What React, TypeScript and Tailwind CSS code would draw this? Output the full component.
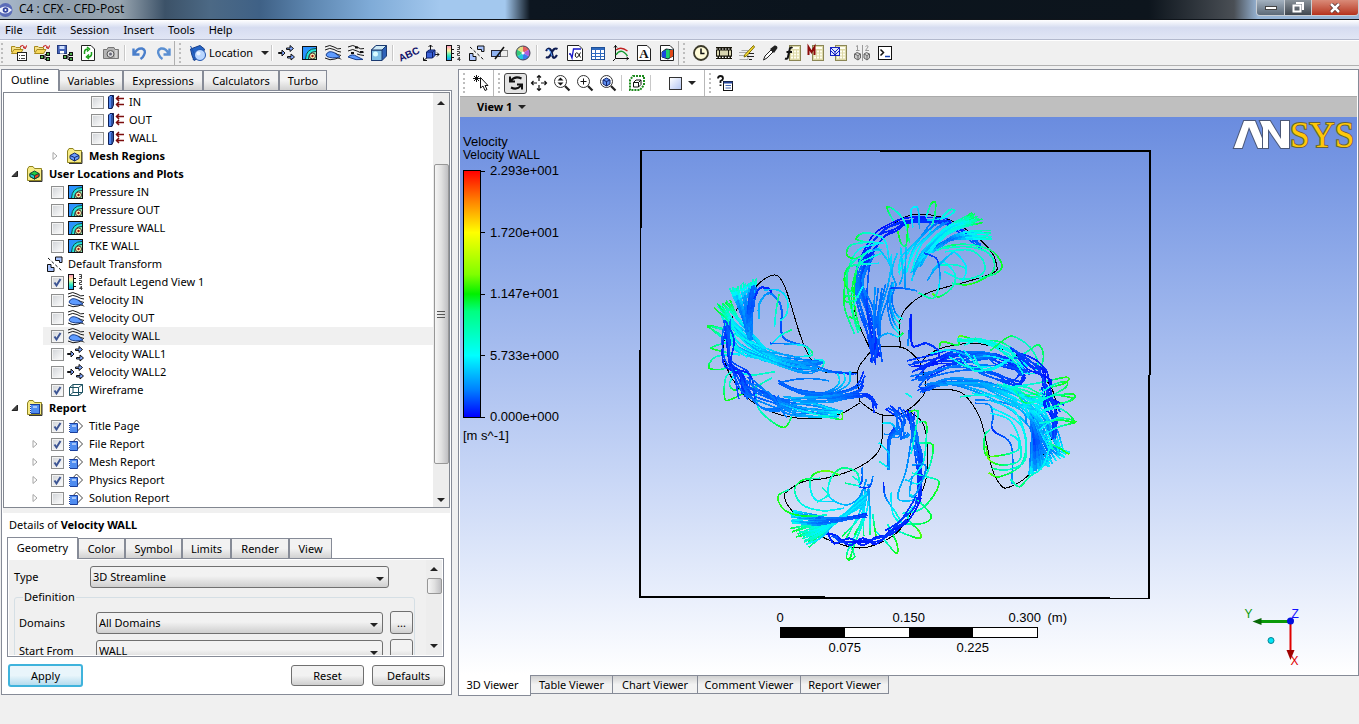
import type { ReactNode } from 'react';

type Pt = [number, number];

/* ---------- small drawing helpers ---------- */

const I = ({ children, size = 16 }: { children: ReactNode; size?: number }) => (
  <svg viewBox="0 0 16 16" width={size} height={size} className="shrink-0 overflow-visible" fill="none" aria-hidden="true">
    {children}
  </svg>
);

const OpenFolder = () => (
  <>
    <path d="M0.5 7V1.500H4L5 2.500H9.500V4" fill="#f5e08a" stroke="#a88a1c" />
    <path d="M0.500 8.500L3 4.500H12L9.500 8.500Z" fill="#f7d85c" stroke="#a88a1c" />
    <path d="M9 1.500Q12 -1 14 2.500M15.500 0.500L14.500 3.500L12 2.500" stroke="#c00000" />
  </>
);

const Nodes = () => (
  <g stroke="#111" fill="#4fae4f">
    <path d="M8 12H11M11 9.500V14.500M11 9.500H13M11 14.500H13" />
    <rect x="6.500" y="10.500" width="3" height="3" />
    <rect x="12.500" y="7.500" width="3" height="3" />
    <rect x="12.500" y="12.500" width="3" height="3" />
  </g>
);

const Page = () => <path d="M1.500 0.500H11L14.500 4V15.500H1.500Z" fill="#fff" stroke="#222" />;

const Calc = () => (
  <g>
    <rect x="4.500" y="0.500" width="11" height="15" fill="#ddd9a8" stroke="#8b8655" />
    <path d="M6 3H14" stroke="#fffef0" strokeWidth="2" />
    <path d="M6 6.500H14M6 9.500H14M6 12.500H14" stroke="#fffef0" strokeWidth="2" strokeDasharray="2 1" />
  </g>
);

const icons: Record<string, ReactNode> = {
  load: (
    <>
      <OpenFolder />
      <rect x="6.500" y="7.500" width="9" height="8" fill="#fff" stroke="#222" />
      <path d="M8 10.500H9M10 10.500H14M8 13.500H9M10 13.500H14" stroke="#444" />
    </>
  ),
  loadState: (
    <>
      <OpenFolder />
      <Nodes />
    </>
  ),
  saveState: (
    <>
      <rect x="0.500" y="0.500" width="9" height="8" fill="#4664b8" stroke="#243b7d" />
      <path d="M2.500 1H7.500V4H2.500Z" fill="#cfe0ff" />
      <path d="M3 6H7V8.500H3Z" fill="#fff" />
      <Nodes />
    </>
  ),
  refresh: (
    <>
      <Page />
      <path d="M4.500 9V6.500Q5 4 8 4M7 2L9.500 4L7 6.500M11.500 7V9.500Q11 12 8 12M9 9.500L6.500 12L9 14" stroke="#19a019" strokeWidth="1.500" />
    </>
  ),
  camera: (
    <>
      <path d="M0.500 4.500H4L5 2.500H11L12 4.500H15.500V13.500H0.500Z" fill="#b4b4b4" stroke="#777" />
      <circle cx="7.500" cy="9" r="3.500" fill="#ddd" stroke="#555" />
      <circle cx="7.500" cy="9" r="1.500" fill="#667" />
      <path d="M13 5V13" stroke="#eee" />
    </>
  ),
  undo: <path d="M1.500 3.500V9.500H7.500M2.500 8.500Q5 3 10 3.500Q14.500 5 12 10Q11 12.500 8.500 14" stroke="#4a7fcb" strokeWidth="2.400" />,
  redo: <path d="M14.500 3.500V9.500H8.500M13.500 8.500Q11 3 6 3.500Q1.500 5 4 10Q5 12.500 7.500 14" stroke="#5a8fd2" strokeWidth="2.400" />,
  location: (
    <>
      <path d="M0.500 4L10 0.500L14.500 4L12.500 11L4 15.500L2 10.500Z" fill="#2465c8" stroke="#183e88" />
      <path d="M0.500 1L5 10M3 15L6 9" stroke="#1d4fa8" />
      <circle cx="10" cy="10" r="5.500" fill="#b9d6ff" stroke="#2256b0" />
      <circle cx="8.500" cy="8.500" r="2" fill="#eaf3ff" />
    </>
  ),
  vector: (
    <g fill="#7fa6ff" stroke="#111">
      <path d="M-0.500 7.500H3V5L6 8L3 11V8.500H-0.500Z" />
      <path d="M7.500 3H11V0.500L14.500 3.500L11 6.500V4.500H7.500Z" />
      <path d="M8.500 11.500H12V9L15.500 12L12 15V13H8.500Z" />
    </g>
  ),
  contour: (
    <>
      <rect x="0" y="1" width="15" height="14" fill="#2a92ff" />
      <path d="M14 3Q4 2 3 14H14Z" fill="#20e8d8" />
      <path d="M14 6Q6.500 6 6 14H14Z" fill="#8ff0b0" />
      <path d="M3.500 14Q4 3.500 14 3.500M6.500 14Q6.500 6.500 14 6.500" stroke="#0f3a50" />
      <circle cx="10.500" cy="11" r="3" fill="#fff8b0" stroke="#433" />
      <circle cx="10.500" cy="11" r="1.200" fill="#a01010" />
      <rect x="0.500" y="1.500" width="14" height="13" stroke="#111" />
    </>
  ),
  stream: (
    <>
      <g stroke="#1a1a1a">
        <path d="M0 2Q5 -1 9 2T16 3.500M0 5Q5 2 9 4.500T16 7M10 8Q13 10 16 10.500M0 13Q5 16 10 14T16 14.500" />
      </g>
      <path d="M1 10Q3 5 9 7.500Q12 9.500 15 12Q7 14 2 11.500Z" fill="#5f9cff" stroke="#173d8c" />
    </>
  ),
  particle: (
    <>
      <path d="M0 2Q5 -1 9 2T16 3.500M0 6Q5 3 9 6T16 7M9 9Q12 10 16 10.500" stroke="#1a1a1a" />
      <path d="M7 2.500H10M3 8H6M12 7H15" stroke="#111" strokeWidth="2" />
      <path d="M0 12Q4 8 9 11.500Q12 13 15 14.500Q7 15.500 3 13Z" fill="#5f9cff" stroke="#173d8c" />
    </>
  ),
  volume: (
    <>
      <path d="M0.500 5L5 0.500H15.500V11L11 15.500H0.500Z" fill="#2e62b8" stroke="#1b3a70" />
      <path d="M0.500 5H11V15.500H0.500Z" fill="#7fbfe6" stroke="#1b3a70" />
      <path d="M0.500 5L5 0.500H15.500L11 5Z" fill="#cfeaf6" stroke="#1b3a70" />
      <circle cx="4.500" cy="9" r="2.500" fill="#d8fbff" />
    </>
  ),
  text: (
    <text x="-2" y="13" transform="rotate(-24 8 9)" fontSize="10" fontWeight="bold" fontFamily="Liberation Sans" fill="#10106a">
      ABC
    </text>
  ),
  coord: (
    <>
      <path d="M7.500 6V0M5.500 2L7.500 0L9.500 2M10 9.500H16M14 7.500L16 9.500L14 11.500M5 12L0.500 15.500M0.500 12.500V15.500H4" stroke="#111" />
      <path d="M3.500 7L6 5H12V10.500L9.500 13H3.500Z" fill="#3b62d8" stroke="#0c1f66" />
      <path d="M3.500 7H9.500V13M9.500 7L12 5" stroke="#0c1f66" />
    </>
  ),
  legend: (
    <>
      <rect x="0.500" y="0.500" width="5" height="15" fill="url(#legendIcon)" stroke="#111" />
      <path d="M6 4.500H8M6 8.500H8M6 12.500H8" stroke="#111" />
      <path d="M11 0.500H13.500V4.500H11M11.500 2.500H13M11 6.500H13.500V8.500H11.500V10.500H14M13.500 12L11.500 14.500H14.500M13.500 12V16" stroke="#444" />
    </>
  ),
  transform: (
    <>
      <path d="M8.500 1H15V6.500H12.500V4.500H8.500Z" fill="#a9c4ff" stroke="#111" />
      <path d="M0.500 8.500H4V11.500H7V15.500H0.500Z" fill="#a9c4ff" stroke="#111" />
      <path d="M1 2L15 15" stroke="#111" strokeDasharray="3 2" />
    </>
  ),
  clip: (
    <>
      <rect x="-0.500" y="5.500" width="9" height="6" fill="#8fb2f2" stroke="#223" />
      <rect x="8.500" y="5.500" width="7" height="6" fill="#eee" stroke="#222" strokeDasharray="1 1" />
      <path d="M3 14L12 2" stroke="#111" strokeWidth="1.500" />
    </>
  ),
  wheel: (
    <>
      <circle cx="8" cy="8" r="7" fill="#eee" />
      <path d="M8 8L8 1A7 7 0 0 1 14 4.500Z" fill="#e46060" />
      <path d="M8 8L14 4.500A7 7 0 0 1 14 11.500Z" fill="#b05cd8" />
      <path d="M8 8L14 11.500A7 7 0 0 1 8 15Z" fill="#3d7af0" />
      <path d="M8 8L8 15A7 7 0 0 1 2 11.500Z" fill="#22c8d8" />
      <path d="M8 8L2 11.500A7 7 0 0 1 2 4.500Z" fill="#34c878" />
      <path d="M8 8L2 4.500A7 7 0 0 1 8 1Z" fill="#e2dc80" />
      <circle cx="8" cy="8" r="7" stroke="#445" />
      <circle cx="8" cy="8" r="1.500" fill="#fff" />
    </>
  ),
  variable: (
    <>
      <path d="M2 6Q5 1 7.500 6L8.500 11Q10 15 13 10M13.500 4Q10 2 7.500 8Q5 14 2 12" stroke="#0d1b50" strokeWidth="2.200" />
      <path d="M3 5Q5 3 6.500 7L8 11" stroke="#5aa0ff" />
    </>
  ),
  expression: (
    <>
      <path d="M0.500 0.500H12L15.500 4V15.500H0.500Z" fill="#fff" stroke="#222" />
      <path d="M2 9H3.500L5 13L6.500 4H14" stroke="#1515c8" strokeWidth="1.300" />
      <path d="M13.500 7.500Q11 13 9.500 12.500Q7.500 11.500 8.500 8.500Q10.500 6 13.500 12.500" stroke="#111" />
    </>
  ),
  table: (
    <>
      <rect x="1.500" y="2.500" width="13" height="12" fill="#fff" stroke="#1f5096" />
      <path d="M2 4H14" stroke="#2e6ac0" strokeWidth="2" />
      <path d="M1 8.500H14M1 11.500H14M5.500 3V14.500M10.500 3V14.500" stroke="#2e6ac0" />
    </>
  ),
  chart: (
    <>
      <path d="M2.500 0V13.500H16M1 2.500L2.500 0.500L4 2.500M13.500 12L15.500 13.500L13.500 15M2.500 13.500L0 16" stroke="#111" />
      <path d="M3 5Q8 1 14.500 6" stroke="#c02020" strokeWidth="1.300" />
      <path d="M3 10Q8 2 14.500 11" stroke="#139a30" strokeWidth="1.300" />
    </>
  ),
  comment: (
    <>
      <Page />
      <text x="8" y="13" textAnchor="middle" fontSize="13" fontWeight="bold" fontFamily="Liberation Serif" fill="#111">
        A
      </text>
    </>
  ),
  figure: (
    <>
      <Page />
      <path d="M3 7L7 4L14 5V11L9 14L3 12Z" fill="#20a860" stroke="#123" />
      <path d="M3 7L7 5V13L3 12Z" fill="#1a48e0" />
      <path d="M7 5L10 4.500V13L7 13Z" fill="#1fd070" />
      <path d="M11 5L14 5V11L11 13Z" fill="#e04818" />
    </>
  ),
  clock: (
    <>
      <circle cx="8" cy="8" r="7" fill="#fffbd8" stroke="#3c3a2a" strokeWidth="1.800" />
      <path d="M8 3.500V8.500H11.500" stroke="#111" strokeWidth="1.500" />
    </>
  ),
  film: (
    <>
      <rect x="0" y="2" width="16" height="12" fill="#17150a" />
      <path d="M0 4H16M0 12.300H16" stroke="#fff" strokeWidth="1.200" strokeDasharray="1.500 1.500" />
      <path d="M1 5.500H3V10.500H1ZM4 5.500H12V10.500H4ZM13 5.500H15V10.500H13Z" fill="#d9d6b0" />
    </>
  ),
  quickEdit: (
    <>
      <path d="M2.500 5.500H9V14.500H0.500M0 7.500H8M0 10.500H8" stroke="#aaa" />
      <path d="M14.500 0.500L6 9.500L5 12L7.500 11L15.500 2Z" fill="#ffe030" stroke="#7a6a00" />
      <path d="M10 8.500H15M8 11.500H15M10 14.500H13" stroke="#222" />
    </>
  ),
  probe: (
    <>
      <path d="M1.500 15L3 11L9 5L11 7L5 13Z" fill="#fff" stroke="#222" />
      <path d="M8 4L12 8L15.500 3Q15.500 0 12.500 0.500Z" fill="#222" />
    </>
  ),
  functionCalc: (
    <>
      <Calc />
      <path d="M7.500 3Q5 1.500 4.500 5L3 12Q2.500 14.500 0 13.500M1.500 7H7" stroke="#111" strokeWidth="2" />
    </>
  ),
  macroCalc: (
    <>
      <Calc />
      <path d="M0.500 10V2L3.500 7L6.500 2V10" stroke="#8b0a0a" strokeWidth="2" />
    </>
  ),
  meshCalc: (
    <>
      <Calc />
      <rect x="-0.500" y="2.500" width="9" height="8" fill="#dfe6ff" stroke="#1420c0" />
      <path d="M0 3L4 7L8 3M4 7V10M0 6L4 10L8 6" stroke="#1420c0" />
    </>
  ),
  compare: (
    <g stroke="#9a9a9a">
      <path d="M8.500 0V16M2 1.500L3.500 0.500V5M2 5.500H5.500M11.500 1.500Q14 -0.500 14 2L11.500 5.500H15" />
      <path d="M0.500 9L3 7.500L6.500 9V13L4 15L0.500 13ZM0.500 9L4 10.500L6.500 9M4 10.500V15M10 9L12.500 7.500L15.500 9V13L13 15L10 13ZM10 9L13 10.500L15.500 9M13 10.500V15" fill="#ccc" stroke="#666" />
    </g>
  ),
  command: (
    <>
      <rect x="1.500" y="1.500" width="13" height="13" fill="#fff" stroke="#111" />
      <path d="M3.500 4.500L6.500 7.500L3.500 10.500" stroke="#111" strokeWidth="1.500" />
      <path d="M8 11.500H13" stroke="#1540b0" strokeWidth="1.500" />
    </>
  ),
  select: (
    <>
      <path d="M3.500 0V7M0 3.500H7M1 1L6 6M6 1L1 6" stroke="#111" />
      <path d="M7.500 2.500V13L10 11L12 15.500L14 14.500L12 10.500H15Z" fill="#fff" stroke="#111" />
    </>
  ),
  rotate: (
    <path d="M3 5.500Q7 0.500 13.500 3.500M2 1.500V6.500H7M13 10.500Q9 15.500 3 12.500M14 14.500V9.500H9" stroke="#111" strokeWidth="2" />
  ),
  pan: (
    <path
      d="M8 0.500V6M8 10V15.500M0.500 8H6M10 8H15.500M6 2.500L8 0.500L10 2.500M6 13.500L8 15.500L10 13.500M2.500 6L0.500 8L2.500 10M13.500 6L15.500 8L13.500 10"
      stroke="#111"
      strokeWidth="1.200"
    />
  ),
  zoomDrag: (
    <>
      <circle cx="6.500" cy="6.500" r="6" stroke="#333" />
      <path d="M11 11L15.500 15.500" stroke="#222" strokeWidth="2.200" />
      <path d="M3.500 5.500H9.500L6.500 2.500ZM3.500 7.500H9.500L6.500 10.500Z" fill="#111" />
    </>
  ),
  zoomBox: (
    <>
      <circle cx="6.500" cy="6.500" r="6" stroke="#333" />
      <path d="M11 11L15.500 15.500" stroke="#222" strokeWidth="2.200" />
      <path d="M6.500 3.500V9.500M3.500 6.500H9.500" stroke="#111" />
    </>
  ),
  fit: (
    <>
      <circle cx="6.500" cy="6.500" r="6" stroke="#333" />
      <path d="M11 11L15.500 15.500" stroke="#222" strokeWidth="2.200" />
      <path d="M3 5L6.500 3L10 5V9L6.500 11L3 9Z" fill="#5e8df0" stroke="#12266c" />
      <path d="M3 5L6.500 6.500L10 5M6.500 6.500V11" stroke="#12266c" />
    </>
  ),
  highlight: (
    <>
      <path d="M4 1H15V10L11 15H1V5Z" stroke="#1d8a1d" strokeWidth="2" strokeDasharray="2 1" />
      <path d="M4.500 7.500H9.500V12H4.500ZM4.500 7.500L7 5H12V9.500L9.500 12M9.500 7.500L12 5" stroke="#111" />
    </>
  ),
  help: (
    <>
      <path d="M1 3.500Q1 1 3.500 1T6 3.500Q6 5 3.500 6V8M3.500 9.500V11" stroke="#111" strokeWidth="1.800" />
      <rect x="6.500" y="6.500" width="9" height="9" fill="#fff" stroke="#111" />
      <path d="M6.500 7.500H15.500" stroke="#24459a" strokeWidth="2" />
      <path d="M8.500 10.500H14M8.500 13H14" stroke="#4468b8" />
    </>
  ),
  boundary: (
    <>
      <path d="M0.500 3L2 1.500H5.500V11L4 14.500H0.500Z" fill="#4f86f0" stroke="#0f1f55" />
      <path d="M4 3V14M4 3L5.500 1.500" stroke="#0f1f55" />
      <path d="M8 4.500H16M11 2L8.500 4.500L11 7M8 10.500H16M11 8L8.500 10.500L11 13" stroke="#7c0d0d" strokeWidth="1.500" />
    </>
  ),
  folderMesh: (
    <>
      <path d="M0.500 3L2 0.500H6L7.500 2.500H14.500V14.500H0.500Z" fill="#f7eb86" stroke="#8f8420" />
      <path d="M15 4V15.500H2" stroke="#333" />
      <path d="M3 7.500L7.500 5L12 7.500V10.500L7.500 13L3 10.500Z" fill="#6b9cff" stroke="#122968" />
      <path d="M3 7.500L7.500 9.500L12 7.500M7.500 9.500V13" stroke="#122968" />
    </>
  ),
  folderUser: (
    <>
      <path d="M0.500 3L2 0.500H6L7.500 2.500H14.500V14.500H0.500Z" fill="#f7eb86" stroke="#8f8420" />
      <path d="M15 4V15.500H2" stroke="#333" />
      <path d="M3 7.500L7.500 5L12 7.500V10.500L7.500 13L3 10.500Z" fill="#21cc42" stroke="#143" />
      <path d="M7.500 9.500L12 7.500V10.500L7.500 13Z" fill="#f04020" stroke="#143" />
      <path d="M3 7.500L7.500 9.500V13L3 10.500Z" fill="#28c9d8" stroke="#143" />
    </>
  ),
  folderReport: (
    <>
      <path d="M0.500 3L2 0.500H6L7.500 2.500H14.500V14.500H0.500Z" fill="#f7eb86" stroke="#8f8420" />
      <path d="M15 4V15.500H2" stroke="#333" />
      <rect x="3.500" y="4.500" width="9" height="9" fill="#4f8cf0" stroke="#1b3f9c" />
      <path d="M3.500 5V14" stroke="#eef" strokeDasharray="1 1" />
      <path d="M6 7H10" stroke="#fff" />
    </>
  ),
  report: (
    <>
      <path d="M8.500 2L14.500 8L8.500 14L3 8Z" fill="#fff" stroke="#444" />
      <path d="M1.500 5.500H9.500V14.500H1.500Z" fill="#4f8cf0" stroke="#1b3f9c" />
      <path d="M1.500 6V15" stroke="#fff" strokeDasharray="1 1" />
      <path d="M4 8H8" stroke="#fff" />
    </>
  ),
  wireframe: (
    <path d="M1.500 5.500H10.500V13.500H1.500ZM1.500 5.500L5 2.500H14.500V10.500L10.500 13.500M10.500 5.500L14.500 2.500M5 2.500V10.500H14.500M5 10.500L1.500 13.500" stroke="#1a5060" />
  ),
};

const Icon = ({ name }: { name: string }) => <I>{icons[name]}</I>;

const Caret = ({ up = false }: { up?: boolean }) => (
  <svg width="8" height="4" viewBox="0 0 8 4" aria-hidden="true" className="shrink-0">
    <path d={up ? 'M0 4L4 0L8 4Z' : 'M0 0H8L4 4Z'} fill="#222" />
  </svg>
);

/* ---------- toolbars ---------- */

function Tool({ name, label, active = false }: { name: string; label: string; active?: boolean }) {
  return (
    <button
      aria-label={label}
      className={
        active
          ? 'flex h-[21px] w-[23px] items-center justify-center rounded-[3px] border border-[#444] bg-[#e4e4e4]'
          : 'flex h-[21px] w-[23px] items-center justify-center'
      }
    >
      <Icon name={name} />
    </button>
  );
}

const Tools = ({ names }: { names: string[] }) => (
  <>
    {names.map((n) => (
      <Tool key={n} name={n} label={n} />
    ))}
  </>
);

const Separator = () => <div className="mx-[2px] h-4 w-0.5 border-l border-[#c8c8c8] bg-white" />;

const Grip = () => (
  <div className="flex h-5 w-[2px] flex-col justify-between">
    {[0, 1, 2, 3, 4].map((i) => (
      <span key={i} className="h-[2px] w-[2px] bg-[#bdbdbd]" />
    ))}
  </div>
);

function TitleBar() {
  return (
    <header className="flex h-5 items-start justify-between border-b border-[#10151b] bg-[linear-gradient(90deg,#a9b9cb_0px,#8d9cab_60px,#98a5b0_120px,#3c5268_165px,#4c6985_210px,#3f6186_260px,#5d86b0_310px,#7fabd7_370px,#a3c8ee_440px,#a3c8ee_505px,#0d1620_530px,#0b141d_60%,#0d151d_calc(100%-210px),#4a4f55_calc(100%-125px),#98b5d6_calc(100%-101px))]">
      <div className="flex h-[18px] items-center gap-1.5">
        <svg width="13" height="15" viewBox="0 0 13 15" aria-hidden="true">
          <circle cx="5.500" cy="8" r="7" fill="#5a6cb8" />
          <path d="M-2 8Q5.500 1 12 8Q5.500 15 -2 8Z" fill="#eef2ff" />
          <circle cx="5.500" cy="8" r="2.800" fill="#3548a0" />
          <circle cx="5.500" cy="8" r="1" fill="#fff" />
        </svg>
        <h1 className="font-['Open_Sans',sans-serif] text-xs leading-4 text-black">C4 : CFX - CFD-Post</h1>
      </div>
      <div className="flex h-4 overflow-hidden rounded-b-[4px] border border-t-0 border-[#c9ced4]">
        <button aria-label="Minimize" className="flex w-7 items-center justify-center border-r border-[#c9ced4] bg-linear-to-b from-[#a4b2c0] to-[#5d6a78]">
          <span className="h-1 w-3 border border-[#444] bg-white" />
        </button>
        <button aria-label="Restore" className="flex w-[27px] items-center justify-center border-r border-[#c9ced4] bg-linear-to-b from-[#8b949c] to-[#40474f]">
          <svg width="12" height="11" viewBox="0 0 12 11" aria-hidden="true">
            <path d="M4 1H11V8M1.500 3.500H8.500V9.500H1.500Z" fill="none" stroke="#fff" strokeWidth="2" />
          </svg>
        </button>
        <button aria-label="Close" className="flex w-[46px] items-center justify-center bg-linear-to-b from-[#d98a78] to-[#b5301a]">
          <svg width="12" height="10" viewBox="0 0 12 10" aria-hidden="true">
            <path d="M2 1L10 9M10 1L2 9" stroke="#4d2a2a" strokeWidth="4" />
            <path d="M2 1L10 9M10 1L2 9" stroke="#fff" strokeWidth="2.500" />
          </svg>
        </button>
      </div>
    </header>
  );
}

function MenuBar() {
  return (
    <nav className="flex h-5 items-center gap-[14px] border-b border-[#b3b9cd] bg-linear-to-b from-white via-[#d6dcf0] via-40% to-[#e1e6f5] px-[5px]">
      {['File', 'Edit', 'Session', 'Insert', 'Tools', 'Help'].map((m) => (
        <button key={m}>{m}</button>
      ))}
    </nav>
  );
}

function MainToolbar() {
  return (
    <div className="flex h-[26px] items-center border-t border-b border-t-white border-b-[#b0b0b0]">
      <div className="flex h-full items-center border-r border-[#b0b0b0] pl-px">
        <Grip />
        <div className="w-1" />
        <Tools names={['load', 'loadState', 'saveState', 'refresh', 'camera']} />
        <Separator />
        <Tools names={['undo', 'redo']} />
      </div>
      <div className="flex h-full items-center border-r border-[#b0b0b0] pl-1">
        <Grip />
        <button className="flex h-5 w-[88px] items-center pl-[9px]">
          <Icon name="location" />
          <span className="ml-[3px] flex-1 text-left">Location</span>
          <Caret />
        </button>
        <Separator />
        <Tools names={['vector', 'contour', 'stream', 'particle', 'volume']} />
        <Separator />
        <Tools names={['text', 'coord', 'legend', 'transform', 'clip', 'wheel']} />
        <Separator />
        <Tools names={['variable', 'expression', 'table', 'chart', 'comment', 'figure']} />
      </div>
      <div className="flex items-center pl-1">
        <Grip />
        <div className="w-1" />
        <Tools names={['clock', 'film', 'quickEdit', 'probe', 'functionCalc', 'macroCalc', 'meshCalc', 'compare', 'command']} />
      </div>
    </div>
  );
}

/* ---------- outline tree ---------- */

interface TreeItem {
  label: string;
  icon: string;
  depth: 0 | 1 | 2 | 3;
  checked?: boolean;
  open?: boolean;
  bold?: boolean;
  selected?: boolean;
}

const tree: TreeItem[] = [
  { label: 'IN', icon: 'boundary', depth: 3, checked: false },
  { label: 'OUT', icon: 'boundary', depth: 3, checked: false },
  { label: 'WALL', icon: 'boundary', depth: 3, checked: false },
  { label: 'Mesh Regions', icon: 'folderMesh', depth: 2, open: false, bold: true },
  { label: 'User Locations and Plots', icon: 'folderUser', depth: 0, open: true, bold: true },
  { label: 'Pressure IN', icon: 'contour', depth: 1, checked: false },
  { label: 'Pressure OUT', icon: 'contour', depth: 1, checked: false },
  { label: 'Pressure WALL', icon: 'contour', depth: 1, checked: false },
  { label: 'TKE WALL', icon: 'contour', depth: 1, checked: false },
  { label: 'Default Transform', icon: 'transform', depth: 1 },
  { label: 'Default Legend View 1', icon: 'legend', depth: 1, checked: true },
  { label: 'Velocity IN', icon: 'stream', depth: 1, checked: false },
  { label: 'Velocity OUT', icon: 'stream', depth: 1, checked: false },
  { label: 'Velocity WALL', icon: 'stream', depth: 1, checked: true, selected: true },
  { label: 'Velocity WALL1', icon: 'vector', depth: 1, checked: false },
  { label: 'Velocity WALL2', icon: 'vector', depth: 1, checked: false },
  { label: 'Wireframe', icon: 'wireframe', depth: 1, checked: true },
  { label: 'Report', icon: 'folderReport', depth: 0, open: true, bold: true },
  { label: 'Title Page', icon: 'report', depth: 1, checked: true },
  { label: 'File Report', icon: 'report', depth: 1, checked: true, open: false },
  { label: 'Mesh Report', icon: 'report', depth: 1, checked: true, open: false },
  { label: 'Physics Report', icon: 'report', depth: 1, checked: true, open: false },
  { label: 'Solution Report', icon: 'report', depth: 1, checked: false, open: false },
];

const indents = ['pl-[3px]', 'pl-[23px]', 'pl-[43px]', 'pl-[63px]'];

function TreeRow({ item }: { item: TreeItem }) {
  const hasCheck = item.checked !== undefined;
  return (
    <li className={`flex h-[18px] items-center ${indents[item.depth]}`}>
      <span className="flex w-4 shrink-0 justify-center">
        {item.open !== undefined && (
          <svg width="8" height="8" viewBox="0 0 8 8" aria-hidden="true">
            {item.open ? <path d="M1 6.500L6.500 1V6.500Z" fill="#444" stroke="#222" /> : <path d="M2 0.500L6 4L2 7.500Z" fill="#fff" stroke="#a5a5a5" />}
          </svg>
        )}
      </span>
      <label className={`flex h-full flex-1 items-center ${item.selected ? 'bg-[#f0f0f0]' : ''} ${hasCheck ? 'pl-2' : 'pl-1'}`}>
        {hasCheck && (
          <span className="relative mr-1 h-[13px] w-[13px]">
            <input
              type="checkbox"
              defaultChecked={item.checked}
              className="peer block h-[13px] w-[13px] appearance-none border border-[#8e8f8f] bg-linear-to-br from-[#cfd2d6] to-white outline outline-1 -outline-offset-2 outline-[#f4f4f4]"
            />
            <svg viewBox="0 0 13 13" className="pointer-events-none absolute inset-0 hidden peer-checked:block" aria-hidden="true">
              <path d="M3.500 6.500L5.500 9.500L9.500 3" fill="none" stroke="#3d5594" strokeWidth="2" />
            </svg>
          </span>
        )}
        <Icon name={item.icon} />
        <span className={item.bold ? 'ml-[6px] font-bold' : 'ml-[5px]'}>{item.label}</span>
      </label>
    </li>
  );
}

/* ---------- left column ---------- */

function Tabs({ items, className = '' }: { items: [string, string][]; className?: string }) {
  return (
    <div role="tablist" className={`relative z-10 flex items-end ${className}`}>
      {items.map(([label, width], i) => (
        <button
          key={label}
          role="tab"
          aria-selected={i === 0}
          className={
            i === 0
              ? `-mb-px h-[22px] border border-b-0 border-[#868b97] bg-white pb-0.5 ${width}`
              : `h-5 border border-b-0 border-[#868b97] bg-linear-to-b from-[#f2f2f2] from-50% to-[#d2d2d2] ${width}`
          }
        >
          {label}
        </button>
      ))}
    </div>
  );
}

const thumbClass = 'rounded-[2px] border border-[#979797] bg-linear-to-r from-[#f5f5f5] via-[#e0e0e0] to-[#bfbfc2]';

function SelectBox({ id, value, className }: { id: string; value: string; className: string }) {
  return (
    <div className={`relative shrink-0 ${className}`}>
      <select
        id={id}
        defaultValue={value}
        className="block h-[22px] w-full appearance-none rounded-[3px] border border-[#707070] bg-linear-to-b from-[#f2f2f2] from-45% to-[#cfcfcf] pl-[2px] text-black"
      >
        <option>{value}</option>
      </select>
      <span className="pointer-events-none absolute top-[11px] right-[5px] flex">
        <Caret />
      </span>
    </div>
  );
}

const buttonClass = 'rounded-[3px] border border-[#707070] bg-linear-to-b from-[#f2f2f2] from-50% to-[#cfcfcf]';

function Details() {
  return (
    <section className="bg-white pb-[6px] pl-1">
      <h2 className="flex h-6 items-center gap-[3px] pl-0.5 text-[11px]">
        Details of <b>Velocity WALL</b>
      </h2>
      <Tabs
        items={[
          ['Geometry', 'w-[71px]'],
          ['Color', 'w-[47px]'],
          ['Symbol', 'w-[57px]'],
          ['Limits', 'w-[49px]'],
          ['Render', 'w-[58px]'],
          ['View', 'w-[43px]'],
        ]}
      />
      <div className="mr-[6px] flex h-[99px] border border-[#868b97] bg-white p-px">
        <div className="h-[95px] flex-1 overflow-hidden bg-[#f0f0f0] px-[5px] pt-[6px]">
          <div className="flex items-center">
            <label htmlFor="type" className="w-[76px]">
              Type
            </label>
            <SelectBox id="type" value="3D Streamline" className="w-[299px]" />
          </div>
          <fieldset className="mt-px mr-[6px] rounded-[3px] border border-[#d5dfe5] pl-[4px]">
            <legend className="ml-1 px-px leading-4">Definition</legend>
            <div className="mt-[6px] flex items-center">
              <label htmlFor="domains" className="w-[77px]">
                Domains
              </label>
              <SelectBox id="domains" value="All Domains" className="w-[287px]" />
              <button aria-label="Pick domains" className={`ml-[7px] h-[23px] w-[23px] ${buttonClass}`}>
                ...
              </button>
            </div>
            <div className="mt-[5px] flex items-center">
              <label htmlFor="start" className="w-[77px]">
                Start From
              </label>
              <SelectBox id="start" value="WALL" className="w-[287px]" />
              <button aria-label="Pick start location" className={`ml-[7px] h-[23px] w-[23px] ${buttonClass}`} />
            </div>
          </fieldset>
        </div>
        <div className="flex w-4 flex-col items-center bg-[#ededed]">
          <div className="flex h-[18px] items-center">
            <Caret up />
          </div>
          <div className={`h-4 w-[15px] ${thumbClass}`} />
          <div className="flex-1" />
          <div className="flex h-[18px] items-center">
            <Caret />
          </div>
        </div>
      </div>
      <div className="flex items-center gap-2 pt-[7px] pr-[5px] pl-px">
        <button className="h-[23px] w-[75px] rounded-[3px] border-2 border-[#3fb3dc] bg-linear-to-b from-[#e9f5fb] from-50% to-[#b5dcee]">Apply</button>
        <div className="flex-1" />
        <button className={`h-[21px] w-[73px] ${buttonClass}`}>Reset</button>
        <button className={`h-[21px] w-[73px] ${buttonClass}`}>Defaults</button>
      </div>
    </section>
  );
}

function Sidebar() {
  return (
    <aside className="w-[454px] shrink-0 pl-px">
      <Tabs
        items={[
          ['Outline', 'w-[58px]'],
          ['Variables', 'w-[64px]'],
          ['Expressions', 'w-[80px]'],
          ['Calculators', 'w-[76px]'],
          ['Turbo', 'w-[48px]'],
        ]}
      />
      <div className="mr-[2px] border border-[#868b97] bg-white p-px">
        <div className="flex border border-[#828790] bg-white">
          <ul className="flex-1">
            {tree.map((item) => (
              <TreeRow key={item.label} item={item} />
            ))}
          </ul>
          <div className="flex w-4 flex-col items-center bg-[#ededed]">
            <div className="flex h-[71px] items-start pt-2">
              <Caret up />
            </div>
            <div className={`flex h-[300px] w-[15px] flex-col items-center justify-center gap-0.5 ${thumbClass}`}>
              <span className="h-px w-2 bg-[#555]" />
              <span className="h-px w-2 bg-[#555]" />
              <span className="h-px w-2 bg-[#555]" />
            </div>
            <div className="flex flex-1 items-end pb-[5px]">
              <Caret />
            </div>
          </div>
        </div>
        <div className="h-[5px] bg-[#f0f0f0]" />
        <Details />
      </div>
    </aside>
  );
}

/* ---------- streamline plot ---------- */

// seeded noise, so that the plot is the same on every render
function noise(seed: number) {
  let a = seed;
  return () => {
    a = (a * 16807 + 11) % 2147483647;
    return a / 2147483647 - 0.5;
  };
}

const ramp: [number, number, number, number][] = [
  [0, 0, 0, 255],
  [0.12, 0, 60, 255],
  [0.3, 0, 150, 255],
  [0.42, 0, 245, 255],
  [0.55, 0, 255, 170],
  [0.66, 0, 255, 40],
  [0.8, 130, 255, 0],
];

function colour(v: number) {
  for (let i = 1; i < ramp.length; i++) {
    const [hi, ...b] = ramp[i];
    const [lo, ...a] = ramp[i - 1];
    if (v <= hi) {
      const t = (v - lo) / (hi - lo);
      return `rgb(${a.map((c, k) => Math.round(c + (b[k] - c) * t)).join(',')})`;
    }
  }
  return 'rgb(130,255,0)';
}

function at(values: number[], t: number) {
  const p = t * (values.length - 1);
  const i = Math.min(Math.floor(p), values.length - 2);
  return values[i] + (values[i + 1] - values[i]) * (p - i);
}

function spline(p: Pt[], t: number): Pt {
  const s = t * (p.length - 1);
  const i = Math.min(Math.floor(s), p.length - 2);
  const u = s - i;
  const q = [p[Math.max(i - 1, 0)], p[i], p[i + 1], p[Math.min(i + 2, p.length - 1)]];
  const f = (k: 0 | 1) =>
    0.5 *
    (2 * q[1][k] +
      (q[2][k] - q[0][k]) * u +
      (2 * q[0][k] - 5 * q[1][k] + 4 * q[2][k] - q[3][k]) * u * u +
      (3 * q[1][k] - q[0][k] - 3 * q[2][k] + q[3][k]) * u * u * u);
  return [f(0), f(1)];
}

interface Bundle {
  a: Pt[];
  b?: Pt[];
  n?: number;
  v: number[];
  j?: number;
  w?: number;
}

interface Blade {
  origin: Pt;
  bundles: Bundle[];
}

// bundle points are in thirds of a pixel from the blade's origin
const blades: Blade[] = [
  {
    origin: [700, 190],
    bundles: [
      { a: [[60, 345], [120, 410], [190, 480], [280, 508], [372, 512]], b: [[80, 395], [110, 480], [200, 515], [290, 540], [340, 545]], n: 15, v: [0.5, 0.35, 0.38, 0.28, 0.25], j: 8 },
      { a: [[50, 350], [95, 400], [150, 450], [200, 490]], b: [[90, 335], [120, 380], [150, 420], [190, 470]], n: 10, v: [0.65, 0.45, 0.38, 0.4], j: 8 },
      { a: [[95, 298], [120, 370], [150, 445]], b: [[168, 272], [165, 330], [152, 445]], n: 17, v: [0.5, 0.3, 0.22, 0.3], j: 6, w: 6 },
      { a: [[155, 290], [145, 350], [150, 420]], b: [[170, 290], [160, 350], [155, 400]], n: 5, v: [0.25, 0.18, 0.3], j: 4, w: 6 },
      { a: [[90, 460], [30, 410], [80, 420], [160, 460], [270, 500]], v: [0.4, 0.7, 0.5, 0.42, 0.3] },
      { a: [[100, 430], [24, 407], [70, 440], [140, 500]], v: [0.4, 0.68, 0.5, 0.4] },
      { a: [[120, 495], [50, 480], [40, 470], [110, 450]], v: [0.4, 0.68, 0.6, 0.4] },
      { a: [[130, 490], [50, 500], [28, 533], [65, 538], [90, 525]], v: [0.4, 0.52, 0.68, 0.6, 0.4] },
      { a: [[115, 540], [80, 560], [75, 620], [90, 630], [150, 600], [215, 565]], v: [0.45, 0.5, 0.66, 0.68, 0.6, 0.45] },
      { a: [[225, 545], [160, 555], [115, 550], [90, 580], [105, 600], [140, 590]], v: [0.5, 0.5, 0.35, 0.5, 0.66, 0.5] },
      { a: [[170, 615], [180, 660], [225, 700], [255, 712], [272, 690], [285, 650]], v: [0.45, 0.5, 0.6, 0.7, 0.6, 0.3] },
      { a: [[75, 400], [75, 460], [85, 520], [115, 560], [125, 620]], b: [[90, 400], [95, 450], [100, 520], [140, 565], [155, 620]], n: 7, v: [0.2, 0.12, 0.1, 0.15], j: 18 },
      { a: [[100, 540], [145, 610], [185, 645], [240, 660]], b: [[140, 580], [160, 590], [240, 640], [285, 680]], n: 8, v: [0.1, 0.2, 0.25, 0.2], j: 22 },
      { a: [[150, 590], [250, 625], [340, 640], [430, 660]], b: [[230, 625], [270, 670], [350, 680], [410, 685]], n: 12, v: [0.2, 0.25, 0.32, 0.42], j: 12 },
      { a: [[240, 640], [300, 660], [380, 680], [425, 688], [428, 670]], v: [0.3, 0.4, 0.5, 0.72, 0.72] },
      { a: [[240, 575], [290, 600], [390, 608], [470, 590], [495, 548]], b: [[235, 580], [310, 615], [400, 625], [470, 608], [490, 590]], n: 4, v: [0.2, 0.25, 0.22, 0.12], j: 4 },
      { a: [[240, 578], [290, 568], [340, 566], [385, 572]], v: [0.22, 0.24, 0.28] },
      { a: [[250, 625], [350, 622], [430, 615], [500, 612], [530, 640]], b: [[300, 635], [400, 635], [450, 625], [510, 625], [525, 660]], n: 5, v: [0.3, 0.25, 0.1, 0.08], j: 8 },
      { a: [[200, 490], [260, 520], [330, 535], [400, 545], [470, 548]], b: [[180, 480], [270, 500], [330, 520], [390, 540], [455, 555]], n: 4, v: [0.35, 0.3, 0.25, 0.1], j: 5 },
      { a: [[165, 325], [180, 295], [205, 295], [215, 305]], v: [0.1, 0.05], w: 6 },
      { a: [[178, 385], [180, 340], [210, 310], [245, 350], [250, 440], [320, 470], [330, 490]], v: [0.35, 0.32, 0.25, 0.15, 0.25, 0.5], w: 6 },
      { a: [[195, 300], [235, 300], [262, 325], [262, 370], [245, 390]], v: [0.35, 0.38, 0.45, 0.45] },
      { a: [[238, 315], [230, 360], [225, 410]], v: [0.6, 0.42] },
      { a: [[215, 462], [245, 435], [275, 420]], v: [0.35, 0.6] },
      { a: [[215, 460], [270, 462], [320, 470], [338, 495], [290, 500]], v: [0.15, 0.4, 0.6, 0.3] },
      { a: [[345, 508], [372, 512], [370, 530]], v: [0.4, 0.52] },
      { a: [[415, 550], [418, 570], [405, 590], [370, 610]], b: [[450, 550], [447, 575], [420, 600], [390, 615]], n: 3, v: [0.4, 0.35, 0.2], j: 5 },
    ],
  },
  {
    origin: [840, 190],
    bundles: [
      { a: [[60, 230], [45, 300], [65, 380], [95, 480]], b: [[105, 200], [75, 280], [100, 380], [120, 500]], n: 12, v: [0.15, 0.22, 0.15, 0.1], j: 18 },
      { a: [[70, 200], [105, 140], [155, 105], [220, 85], [330, 90]], b: [[80, 220], [125, 150], [170, 120], [230, 95], [335, 100]], n: 8, v: [0.1, 0.08, 0.08, 0.12], j: 9 },
      { a: [[110, 290], [105, 360], [95, 450], [95, 520]], b: [[155, 290], [120, 380], [125, 430], [110, 510]], n: 6, v: [0.28, 0.25, 0.12], j: 10 },
      { a: [[155, 280], [145, 340], [160, 400], [180, 430]], b: [[165, 285], [160, 330], [170, 370], [188, 390]], n: 4, v: [0.32, 0.25, 0.3, 0.55], j: 6 },
      { a: [[115, 445], [145, 430], [175, 440], [190, 430]], v: [0.3, 0.35, 0.68] },
      { a: [[50, 430], [25, 330], [18, 250], [60, 190], [110, 175]], b: [[60, 430], [45, 330], [45, 250], [75, 210], [135, 185]], n: 4, v: [0.55, 0.66, 0.6, 0.45, 0.42], j: 16 },
      { a: [[115, 220], [30, 230], [15, 280], [40, 310]], v: [0.4, 0.6, 0.7, 0.5] },
      { a: [[100, 155], [35, 165], [22, 195], [50, 205], [90, 180]], v: [0.42, 0.55, 0.68, 0.6, 0.42] },
      { a: [[150, 225], [135, 150], [80, 128], [50, 145], [75, 155], [130, 160]], v: [0.35, 0.45, 0.5, 0.68, 0.5, 0.4] },
      { a: [[55, 320], [18, 320], [20, 335], [50, 330]], v: [0.5, 0.68, 0.5] },
      { a: [[30, 380], [40, 382], [40, 350], [70, 290]], v: [0.7, 0.55, 0.4] },
      { a: [[160, 90], [142, 52], [165, 60], [195, 95], [210, 155]], v: [0.5, 0.68, 0.5, 0.45, 0.6] },
      { a: [[175, 125], [185, 160], [200, 165], [205, 105]], v: [0.7, 0.55, 0.7] },
      { a: [[220, 110], [215, 60], [235, 55], [240, 115]], v: [0.4, 0.42, 0.3] },
      { a: [[260, 80], [275, 42], [288, 38], [285, 80], [270, 130]], v: [0.42, 0.68, 0.6, 0.4] },
      { a: [[265, 90], [310, 85], [345, 65], [330, 60], [300, 90]], v: [0.35, 0.42, 0.52, 0.42] },
      { a: [[330, 95], [360, 110], [400, 140]], b: [[300, 95], [350, 120], [430, 175]], n: 6, v: [0.12, 0.1, 0.25], j: 8 },
      { a: [[265, 185], [310, 160], [370, 145], [450, 152]], b: [[290, 185], [330, 150], [370, 125], [450, 125]], n: 9, v: [0.35, 0.2, 0.38, 0.55], j: 8 },
      { a: [[215, 265], [240, 200], [300, 130], [390, 70]], b: [[245, 210], [290, 160], [350, 115], [425, 95]], n: 14, v: [0.35, 0.38, 0.42, 0.45, 0.66], j: 10 },
      { a: [[175, 250], [190, 200], [230, 150], [270, 100]], b: [[215, 235], [240, 170], [280, 130], [330, 100]], n: 5, v: [0.42, 0.35, 0.2], j: 8 },
      { a: [[295, 180], [340, 165], [400, 165], [460, 185], [487, 225], [470, 250], [420, 265]], v: [0.5, 0.6, 0.5, 0.62, 0.68, 0.6, 0.5] },
      { a: [[310, 175], [380, 170], [440, 185], [465, 220], [450, 255], [390, 283], [340, 280]], v: [0.5, 0.52, 0.5, 0.55, 0.6, 0.72, 0.5] },
      { a: [[320, 185], [390, 180], [430, 210], [430, 250], [370, 268], [315, 245]], v: [0.45, 0.5, 0.5, 0.5, 0.42] },
      { a: [[280, 240], [310, 215], [345, 250], [340, 290], [300, 320], [280, 312]], v: [0.35, 0.42, 0.5, 0.6, 0.78] },
      { a: [[300, 225], [350, 225], [380, 240], [370, 270]], v: [0.5, 0.48, 0.4] },
      { a: [[265, 270], [285, 240], [330, 195], [350, 190], [378, 225], [380, 250]], v: [0.3, 0.35, 0.4, 0.42] },
      { a: [[255, 190], [290, 205], [300, 240], [298, 290], [280, 325], [240, 310]], v: [0.15, 0.12, 0.35, 0.55, 0.55] },
      { a: [[155, 295], [190, 295], [230, 302]], v: [0.1, 0.3] },
      { a: [[205, 465], [210, 420], [215, 375], [218, 465], [260, 460], [295, 480], [300, 500]], v: [0.3, 0.1, 0.05, 0.08, 0.12, 0.05], w: 6 },
      { a: [[190, 180], [195, 240], [190, 290]], b: [[160, 190], [155, 240], [150, 280]], n: 4, v: [0.38, 0.3], j: 14 },
      { a: [[100, 180], [120, 180], [150, 220]], v: [0.3, 0.38] },
    ],
  },
  {
    origin: [840, 190],
    bundles: [
      { a: [[215, 525], [270, 495], [340, 482], [420, 492], [480, 510], [550, 540]], b: [[250, 560], [310, 530], [370, 515], [430, 510], [500, 520], [560, 540]], n: 11, v: [0.1, 0.06, 0.15, 0.22, 0.1, 0.15], j: 20 },
      { a: [[240, 570], [320, 545], [400, 540], [480, 555], [545, 582], [560, 560]], b: [[215, 565], [320, 530], [380, 530], [440, 550], [520, 580], [540, 550]], n: 5, v: [0.2, 0.22, 0.2, 0.12, 0.08], j: 10 },
      { a: [[240, 600], [320, 570], [400, 570], [500, 590], [610, 640]], b: [[260, 600], [330, 580], [420, 590], [520, 620], [640, 655]], n: 6, v: [0.15, 0.25, 0.3, 0.35, 0.42], j: 8 },
      { a: [[275, 490], [330, 480], [400, 500], [460, 500], [560, 530]], v: [0.45, 0.4, 0.25, 0.42, 0.25] },
      { a: [[300, 470], [310, 455], [355, 465], [360, 438], [410, 450], [480, 455], [540, 490]], v: [0.6, 0.72, 0.6, 0.78, 0.55, 0.6, 0.4] },
      { a: [[350, 450], [420, 448], [480, 480], [530, 520], [550, 545]], b: [[370, 462], [430, 455], [500, 470], [540, 500], [560, 520]], n: 5, v: [0.5, 0.48, 0.5, 0.42], j: 8 },
      { a: [[455, 480], [500, 445], [525, 440], [570, 470], [595, 515], [585, 545]], v: [0.6, 0.66, 0.5, 0.55, 0.45] },
      { a: [[540, 500], [570, 480], [598, 465], [612, 500], [595, 545], [560, 550]], v: [0.45, 0.6, 0.62, 0.55, 0.42] },
      { a: [[520, 590], [590, 580], [680, 562], [675, 580], [600, 600]], v: [0.42, 0.5, 0.72, 0.68, 0.5] },
      { a: [[545, 615], [620, 612], [700, 625], [660, 640], [590, 630]], v: [0.42, 0.55, 0.72, 0.6, 0.42] },
      { a: [[520, 480], [570, 520], [610, 545], [630, 590], [645, 650]], b: [[540, 500], [580, 540], [620, 560], [620, 610], [660, 660]], n: 7, v: [0.15, 0.1, 0.06, 0.12], j: 18 },
      { a: [[340, 490], [390, 530], [450, 520]], b: [[400, 490], [440, 540], [520, 520]], n: 4, v: [0.4, 0.45, 0.35], j: 16 },
      { a: [[410, 630], [480, 635], [540, 655]], v: [0.25, 0.3] },
      { a: [[400, 610], [480, 620], [560, 650], [620, 670]], v: [0.4, 0.35, 0.42] },
    ],
  },
  {
    origin: [760, 380],
    bundles: [
      { a: [[500, 15], [590, 10], [700, 60], [790, 110], [840, 180]], b: [[560, 5], [680, 10], [770, 40], [840, 90], [880, 180]], n: 7, v: [0.3, 0.3, 0.4, 0.4, 0.2], j: 10 },
      { a: [[810, 100], [815, 180], [815, 278]], b: [[825, 110], [870, 190], [925, 220]], n: 22, v: [0.42, 0.22, 0.25, 0.45], j: 10 },
      { a: [[815, 100], [825, 180], [820, 270]], b: [[815, 110], [840, 180], [855, 250]], n: 9, v: [0.3, 0.15, 0.38], j: 5, w: 6 },
      { a: [[780, 70], [810, 90], [830, 130], [860, 200]], b: [[830, 80], [860, 110], [890, 150], [910, 210]], n: 10, v: [0.42, 0.4, 0.3, 0.5], j: 12 },
      { a: [[860, 0], [880, 60], [895, 120], [890, 165]], b: [[850, 20], [865, 80], [870, 120], [870, 170]], n: 7, v: [0.1, 0.06, 0.15], j: 14 },
      { a: [[800, 75], [870, 50], [940, 42], [935, 60], [850, 90]], v: [0.4, 0.5, 0.68, 0.6, 0.42] },
      { a: [[830, 50], [880, 15], [920, 5], [915, 25], [850, 60]], v: [0.4, 0.5, 0.7, 0.6, 0.42] },
      { a: [[835, 100], [900, 85], [945, 125], [900, 120], [840, 130]], v: [0.4, 0.5, 0.72, 0.6, 0.42] },
      { a: [[840, 150], [890, 115], [948, 125], [900, 140], [860, 160]], v: [0.4, 0.5, 0.7, 0.5, 0.4] },
      { a: [[870, 190], [900, 205], [928, 222]], v: [0.5, 0.76] },
      { a: [[605, 50], [670, 45], [720, 55], [790, 95], [800, 130]], v: [0.5, 0.42, 0.35, 0.25] },
      { a: [[650, 70], [690, 75], [700, 110], [700, 150], [755, 195], [757, 310]], v: [0.2, 0.3, 0.25, 0.1, 0.22, 0.3] },
      { a: [[690, 60], [760, 90], [790, 140], [800, 200], [780, 260], [720, 290], [690, 280]], v: [0.35, 0.42, 0.45, 0.5, 0.55, 0.68, 0.78] },
      { a: [[695, 100], [750, 120], [780, 180], [780, 240], [730, 255], [690, 240], [680, 200]], v: [0.42, 0.42, 0.45, 0.5, 0.6, 0.78, 0.7] },
      { a: [[700, 85], [780, 130], [800, 200], [790, 250], [740, 270], [700, 265]], v: [0.42, 0.42, 0.5, 0.5, 0.6] },
      { a: [[690, 150], [675, 170], [680, 225], [730, 225], [775, 210], [775, 180], [755, 165]], v: [0.52, 0.6, 0.75, 0.5, 0.42, 0.45] },
      { a: [[755, 300], [780, 320], [810, 290], [850, 260], [870, 200]], v: [0.5, 0.6, 0.45, 0.4] },
      { a: [[720, 10], [770, 30], [800, 60], [830, 60]], b: [[740, 15], [800, 20], [830, 30], [860, 50]], n: 4, v: [0.45, 0.5, 0.6, 0.42], j: 10 },
    ],
  },
  {
    origin: [760, 380],
    bundles: [
      { a: [[435, 95], [460, 150], [470, 220], [480, 300], [475, 370]], b: [[455, 95], [468, 150], [485, 220], [485, 300], [480, 360]], n: 8, v: [0.1, 0.22, 0.06, 0.06], j: 10 },
      { a: [[465, 100], [455, 180], [440, 270], [415, 355], [470, 360]], v: [0.1, 0.25, 0.3, 0.35, 0.35] },
      { a: [[385, 90], [420, 120], [440, 175], [445, 150]], b: [[415, 80], [430, 120], [410, 150], [380, 180]], n: 6, v: [0.1, 0.2, 0.25], j: 22 },
      { a: [[405, 145], [388, 180], [386, 265]], b: [[412, 150], [392, 180], [390, 265]], n: 3, v: [0.15, 0.28], j: 3 },
      { a: [[450, 95], [470, 92], [475, 110], [455, 220]], v: [0.75, 0.6, 0.42] },
      { a: [[480, 125], [500, 130], [500, 180], [490, 250], [450, 300]], v: [0.5, 0.7, 0.5, 0.45, 0.35] },
      { a: [[480, 190], [520, 195], [510, 260], [480, 310], [440, 300]], v: [0.5, 0.68, 0.5, 0.45, 0.35] },
      { a: [[460, 280], [500, 290], [538, 305], [520, 350], [480, 390], [430, 400]], v: [0.5, 0.5, 0.7, 0.55, 0.45] },
      { a: [[455, 345], [490, 375], [515, 410], [490, 430], [430, 430], [400, 400], [395, 340]], v: [0.45, 0.6, 0.68, 0.55, 0.42, 0.4] },
      { a: [[372, 310], [378, 350], [410, 400], [430, 430], [450, 420]], v: [0.05, 0.25, 0.5, 0.4, 0.2] },
      { a: [[460, 380], [445, 415], [480, 455], [478, 475], [420, 455]], v: [0.42, 0.5, 0.76, 0.7, 0.45] },
      { a: [[350, 455], [375, 480], [410, 520], [412, 490], [385, 435]], v: [0.42, 0.5, 0.7, 0.68, 0.45] },
      { a: [[320, 405], [270, 500], [262, 535], [285, 530], [270, 490]], v: [0.42, 0.5, 0.68, 0.6, 0.45] },
      { a: [[330, 330], [320, 400], [290, 480], [270, 540]], v: [0.35, 0.42, 0.55, 0.7] },
      { a: [[330, 320], [325, 400], [325, 470]], b: [[310, 330], [300, 400], [250, 470]], n: 5, v: [0.3, 0.38, 0.66], j: 10 },
      { a: [[340, 405], [345, 440], [350, 470]], v: [0.5, 0.75] },
      { a: [[430, 430], [390, 455], [350, 492], [310, 475], [270, 495], [225, 465], [180, 460]], v: [0.1, 0.05, 0.08, 0.05], w: 6 },
      { a: [[440, 420], [400, 460], [350, 472], [310, 495], [270, 475], [225, 490], [205, 460]], v: [0.1, 0.05, 0.08, 0.05], w: 6 },
      { a: [[400, 450], [360, 478], [300, 485], [245, 482], [230, 465]], b: [[400, 455], [360, 480], [290, 490], [250, 480], [220, 470]], n: 2, v: [0.15, 0.06, 0.2], j: 6 },
      { a: [[480, 350], [465, 400], [430, 430], [390, 460]], b: [[475, 350], [460, 380], [425, 425], [380, 455]], n: 3, v: [0.06, 0.1, 0.05], j: 10 },
      { a: [[97, 448], [150, 440], [210, 432], [300, 380]], b: [[155, 495], [200, 460], [240, 420], [320, 340]], n: 12, v: [0.6, 0.45, 0.4, 0.35], j: 8 },
      { a: [[120, 460], [160, 455], [200, 440]], b: [[145, 495], [180, 470], [220, 440]], n: 8, v: [0.5, 0.42, 0.4], j: 6 },
      { a: [[97, 395], [160, 405], [230, 415], [320, 405]], b: [[100, 430], [170, 430], [230, 425], [310, 410]], n: 14, v: [0.42, 0.25, 0.2, 0.1], j: 6 },
      { a: [[85, 330], [55, 350], [75, 390], [130, 408], [200, 405]], v: [0.5, 0.7, 0.68, 0.66, 0.45] },
      { a: [[180, 295], [130, 300], [105, 330], [130, 375], [190, 392], [250, 385]], v: [0.5, 0.66, 0.55, 0.45, 0.45, 0.38] },
      { a: [[240, 285], [200, 272], [160, 285], [152, 320], [170, 360], [230, 365]], v: [0.7, 0.78, 0.66, 0.45, 0.42, 0.35] },
      { a: [[300, 310], [290, 275], [245, 265], [212, 300], [210, 350], [260, 375], [300, 350], [320, 300]], v: [0.5, 0.55, 0.6, 0.42, 0.35, 0.3, 0.3] },
      { a: [[308, 265], [308, 300], [300, 320], [330, 320], [340, 290]], v: [0.25, 0.15, 0.1, 0.3] },
      { a: [[190, 325], [205, 345], [175, 365]], v: [0.5, 0.45] },
      { a: [[260, 310], [300, 318]], b: [[280, 290], [300, 305]], n: 2, v: [0.55, 0.4] },
      { a: [[458, 290], [450, 345], [470, 340], [500, 260], [460, 255]], v: [0.3, 0.35, 0.25, 0.3] },
      { a: [[370, 130], [395, 130], [412, 150], [430, 172], [445, 160]], v: [0.42, 0.35, 0.2, 0.25] },
      { a: [[360, 190], [385, 215], [388, 240]], v: [0.42, 0.3] },
      { a: [[360, 245], [385, 262]], v: [0.5, 0.35] },
      { a: [[440, 40], [455, 50]], v: [0.45, 0.45] },
      { a: [[495, 0], [480, 20], [500, 30]], v: [0.2, 0.1] },
    ],
  },
];

function Streamlines({ origin, bundles }: Blade) {
  const rnd = noise(origin[0] * 31 + bundles.length);
  const segs: ReactNode[] = [];
  bundles.forEach(({ a, b, n = 1, v, j = 0, w = 5 }, k) => {
    for (let i = 0; i < n; i++) {
      const t = n > 1 ? i / (n - 1) : 0;
      const line = a.map((p, m): Pt => {
        const q = b?.[m] ?? p;
        return [p[0] + (q[0] - p[0]) * t + rnd() * j * 1.6, p[1] + (q[1] - p[1]) * t + rnd() * j * 1.6];
      });
      const steps = (line.length - 1) * 5;
      const shift = n > 1 ? rnd() * 0.1 : 0;
      for (let s = 0; s < steps; s++) {
        const p = spline(line, s / steps);
        const q = spline(line, (s + 1) / steps);
        segs.push(
          <path
            key={`${k}-${i}-${s}`}
            d={`M${p[0].toFixed(1)} ${p[1].toFixed(1)}L${q[0].toFixed(1)} ${q[1].toFixed(1)}`}
            stroke={colour(Math.max(0, at(v, s / steps) + shift))}
            strokeWidth={w}
          />,
        );
      }
    }
  });
  return <g transform={`translate(${origin[0]} ${origin[1]}) scale(${1 / 3})`}>{segs}</g>;
}

const smooth = (p: Pt[]) => {
  const n = (p.length - 1) * 6;
  return 'M' + Array.from({ length: n + 1 }, (_, i) => spline(p, i / n).map((c) => c.toFixed(1)).join(' ')).join('L');
};

const outlines: Pt[][] = [
  [[860, 401], [858, 372], [866, 358], [877, 348], [900, 347], [912, 353], [921, 364], [925, 378], [926, 391], [918, 402], [908, 410], [897, 415], [883, 415], [872, 410], [860, 401]],
  [[872, 352], [855, 310], [860, 270], [877, 238], [900, 220], [920, 214], [950, 220], [977, 237], [992, 252], [997, 265], [995, 272], [973, 280], [940, 289], [922, 296], [907, 308], [900, 323], [901, 347]],
  [[920, 363], [937, 350], [963, 344], [987, 345], [1017, 355], [1037, 372], [1053, 390], [1057, 423], [1043, 457], [1027, 477], [1010, 487], [1002, 486], [993, 470], [987, 443], [980, 417], [967, 397], [953, 390], [925, 390]],
  [[908, 410], [923, 423], [928, 447], [927, 477], [917, 503], [900, 530], [880, 543], [860, 548], [837, 543], [817, 533], [792, 510], [785, 497], [787, 492], [803, 482], [827, 478], [853, 470], [873, 458], [882, 443], [883, 415]],
  [[858, 372], [843, 373], [823, 371], [810, 357], [800, 333], [790, 300], [783, 282], [775, 275], [760, 283], [737, 310], [725, 338], [727, 367], [747, 397], [773, 412], [797, 418], [823, 418], [843, 413], [860, 403]],
];

function Plot() {
  return (
    <svg viewBox="461 117 896 558" className="absolute inset-0 h-full w-full" role="img" aria-label="Velocity streamlines through a four-bladed rotor">
      <g fill="none" stroke="#000" shapeRendering="crispEdges">
        <path d="M641.500 228V150.500H910M880 151H1150.500V375M1149.500 375V598.500H1075M1110 598H800M825 597H640.500V350M641 227V360" strokeWidth="1.500" />
        {outlines.map((o, i) => (
          <path key={i} d={smooth(o)} />
        ))}
      </g>
      <g fill="none" strokeLinecap="square" shapeRendering="crispEdges">
        {blades.map((b, i) => (
          <Streamlines key={i} {...b} />
        ))}
      </g>
      {/* axis triad */}
      <g fontFamily="Liberation Sans" fontSize="12">
        <path d="M1260 621.500H1290" stroke="#0a9a0a" strokeWidth="3" />
        <path d="M1253 621.500L1262 618V625Z" fill="#076807" />
        <path d="M1291 622V652" stroke="#e00000" strokeWidth="2" />
        <path d="M1291 660L1287 650H1295Z" fill="#a00000" />
        <circle cx="1291" cy="621" r="3.500" fill="#0010e0" />
        <circle cx="1271.500" cy="640.500" r="3" fill="#00e5f5" stroke="#0a8090" />
        <text x="1245" y="618" fill="#0a9a0a">Y</text>
        <text x="1292" y="618" fill="#1010ff">Z</text>
        <text x="1291" y="665" fill="#e00000">X</text>
      </g>
    </svg>
  );
}

function Legend() {
  return (
    <div className="absolute top-[18px] left-[3px] font-['Liberation_Sans',Arial,sans-serif] text-[13px] text-black">
      <p className="leading-[14px]">Velocity</p>
      <p className="text-xs leading-3">Velocity WALL</p>
      <div className="mt-[9px] flex">
        <div className="h-[248px] w-[18px] border border-black bg-[linear-gradient(#ff0000,#ff8000_12%,#ffff00_25%,#80ff00_42%,#00f000_50%,#00ff80_57%,#00ffff_75%,#0080ff_89%,#0000ff)]" />
        <ol className="-my-[7px] flex flex-col justify-between">
          {['2.293e+001', '1.720e+001', '1.147e+001', '5.733e+000', '0.000e+000'].map((v) => (
            <li key={v} className="flex items-center gap-[5px] leading-4">
              <span className="h-px w-1 bg-black" />
              {v}
            </li>
          ))}
        </ol>
      </div>
      <p className="mt-[10px] leading-[15px]">[m s^-1]</p>
    </div>
  );
}

function ScaleBar() {
  return (
    <div className="absolute bottom-[19px] left-[calc(50%-129px)] w-[288px] font-['Liberation_Sans',Arial,sans-serif] text-[13px] leading-4 text-black">
      <div className="relative h-4">
        <span className="absolute -left-[3px]">0</span>
        <span className="absolute left-[113px]">0.150</span>
        <span className="absolute left-[229px]">0.300</span>
        <span className="absolute left-[268px]">(m)</span>
      </div>
      <div className="mt-px grid h-[11px] w-[258px] grid-cols-4 border border-black bg-white">
        <span className="bg-black" />
        <span />
        <span className="bg-black" />
        <span />
      </div>
      <div className="relative mt-0.5 h-4">
        <span className="absolute left-[49px]">0.075</span>
        <span className="absolute left-[177px]">0.225</span>
      </div>
    </div>
  );
}

function Logo() {
  return (
    <svg width="124" height="36" viewBox="0 0 124 36" className="absolute top-0 right-px" role="img" aria-label="ANSYS">
      <g stroke="#4b5878" strokeWidth="2" paintOrder="stroke">
        <path d="M2 31L12 4H23L34 31H26L17 10L10 31Z" fill="#fff" />
        <path d="M28 4H38L49 22V4H57V31H49L36 12V31H31V11Z" fill="#fff" />
        <text x="58" y="30" fontFamily="Liberation Serif" fontSize="35" fill="#ffc808" stroke="#6b6433" strokeWidth="2">
          SYS
        </text>
      </g>
    </svg>
  );
}

function Viewer() {
  return (
    <main className="flex min-w-0 flex-1 flex-col">
      <div className="flex flex-1 flex-col border border-[#868b97] bg-white px-px">
        <div className="flex h-[26px] items-center">
          <div className="flex h-full items-center border-r border-[#b8b8b8] pr-px pl-[3px]">
            <Grip />
            <div className="w-1" />
            <Tool name="select" label="Select" />
          </div>
          <div className="flex h-full items-center border-r border-[#b8b8b8] pl-1">
            <Grip />
            <div className="w-1" />
            <Tool name="rotate" label="Rotate" active />
            <Tools names={['pan', 'zoomDrag', 'zoomBox', 'fit']} />
            <Separator />
            <Tool name="highlight" label="Highlight" />
            <Separator />
            <button aria-label="Viewport layout" className="flex h-5 w-[50px] items-center justify-end gap-[6px] pr-2">
              <span className="h-[13px] w-[13px] border border-[#333] bg-linear-to-br from-white to-[#b4c6f2]" />
              <Caret />
            </button>
          </div>
          <div className="flex items-center pl-1">
            <Grip />
            <div className="w-0.5" />
            <Tool name="help" label="Help" />
          </div>
        </div>
        <button className="flex h-[21px] items-center gap-[6px] border-t border-[#aaa] bg-[#bfbfbf] pl-[17px] font-bold">
          View 1
          <Caret />
        </button>
        <div className="relative flex-1 bg-linear-to-b from-[#6a8cdf] to-white">
          <Plot />
          <Legend />
          <ScaleBar />
          <Logo />
        </div>
      </div>
      <div role="tablist" className="relative z-10 -mt-px flex items-start">
        <button role="tab" aria-selected="true" className="h-[21px] w-[73px] border border-t-0 border-[#868b97] bg-white pr-1">
          3D Viewer
        </button>
        {[
          ['Table Viewer', 'w-[82px]'],
          ['Chart Viewer', 'w-[85px]'],
          ['Comment Viewer', 'w-[103px]'],
          ['Report Viewer', 'w-[88px]'],
        ].map(([label, width]) => (
          <button key={label} role="tab" className={`h-[19px] border border-l-0 border-[#868b97] bg-linear-to-b from-[#d0d0d0] to-[#f2f2f2] to-50% ${width}`}>
            {label}
          </button>
        ))}
      </div>
    </main>
  );
}

export default function App() {
  return (
    <div className="flex min-h-screen flex-col bg-[#f0f0f0] font-['Noto_Sans',Tahoma,sans-serif] text-[11px] leading-4 whitespace-nowrap text-black">
      <svg width="0" height="0" className="absolute" aria-hidden="true">
        <linearGradient id="legendIcon" x2="0" y2="1">
          <stop offset="0" stopColor="#ff8fc0" />
          <stop offset="0.35" stopColor="#fff6a0" />
          <stop offset="0.7" stopColor="#20e8c0" />
          <stop offset="1" stopColor="#2090ff" />
        </linearGradient>
      </svg>
      <TitleBar />
      <MenuBar />
      <MainToolbar />
      <div className="mt-[3px] mb-7 flex flex-1 gap-[4px]">
        <Sidebar />
        <Viewer />
      </div>
    </div>
  );
}
